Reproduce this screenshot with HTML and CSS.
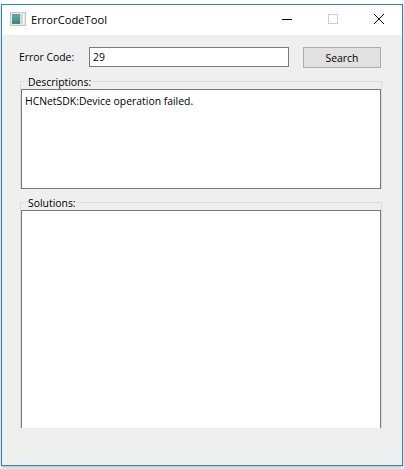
FILE: index.html
```html
<!DOCTYPE html>
<html>
<head>
    <title>ErrorCodeTool</title>
    <link rel="stylesheet" href="styles.css">
</head>
<body>
    <div class="window">
        <div class="titlebar">
            <svg class="app-icon" width="16" height="14" viewBox="0 0 16 14">
                <rect x="0.5" y="0.5" width="15" height="13" fill="#e9ebeb" stroke="#c2c5c5"/>
                <rect x="2" y="2" width="8" height="4" fill="#6d97a3"/>
                <rect x="2" y="6" width="8" height="3" fill="#4f9a94"/>
                <rect x="2" y="9" width="8" height="3" fill="#3f8a70"/>
                <rect x="10" y="2" width="3" height="10" fill="#d3d8d8"/>
                <rect x="13" y="2" width="1" height="10" fill="#f8f9f9"/>
            </svg>
            <span class="title">ErrorCodeTool</span>
            <div class="controls">
                <svg class="ctl" width="46" height="16" viewBox="0 0 46 16"><path d="M18 7.5h10" stroke="#000" fill="none"/></svg>
                <svg class="ctl" width="46" height="16" viewBox="0 0 46 16"><rect x="18.5" y="2.5" width="9" height="9" stroke="#cfcfcf" fill="none"/></svg>
                <svg class="ctl" width="46" height="16" viewBox="0 0 46 16"><path d="M18 2l10 10M28 2L18 12" stroke="#111" fill="none"/></svg>
            </div>
        </div>
        <div class="content">
            <div class="search-row">
                <label class="code-label" for="code">Error Code:</label>
                <input class="code-input" id="code" type="text" value="29">
                <button class="search-btn">Search</button>
            </div>
            <fieldset class="group">
                <legend>Descriptions:</legend>
                <div class="text-box desc-box">HCNetSDK:Device operation failed.</div>
            </fieldset>
            <fieldset class="group">
                <legend>Solutions:</legend>
                <div class="text-box sol-box"></div>
            </fieldset>
        </div>
    </div>
</body>
</html>
```

FILE: styles.css
```css
html, body {
    margin: 0;
    height: 100%;
    background-color: #fff;
    overflow: hidden;
}
body {
    font-family: "Open Sans", Arial, sans-serif;
    font-size: 10.4px;
    color: #000;
    padding: 4px 1px 0 1px;
    box-sizing: border-box;
}
.window {
    width: 402px;
    height: 462px;
    box-sizing: border-box;
    border: 1px solid #2b82d0;
    background-color: #efefef;
    box-shadow: 0 2px 3px rgba(0, 0, 0, 0.25);
    display: flex;
    flex-direction: column;
}
.titlebar {
    height: 30px;
    background-color: #fff;
    display: flex;
    align-items: center;
    padding-left: 8px;
    flex-shrink: 0;
}
.app-icon {
    margin-right: 5px;
    margin-bottom: 2px;
}
.title {
    font-size: 11.2px;
    color: #000;
    margin-bottom: 2px;
}
.controls {
    margin-left: auto;
    display: flex;
}
.ctl {
    display: block;
}
.content {
    flex: 1;
    padding: 12px 20px 0 17px;
    overflow: hidden;
}
.search-row {
    display: flex;
    align-items: flex-start;
    height: 21px;
}
.code-label {
    width: 70px;
    line-height: 20px;
}
.code-input {
    width: 200px;
    height: 20px;
    box-sizing: border-box;
    border: 1px solid #7a7a7a;
    background-color: #fff;
    padding: 0 3px;
    font: inherit;
    color: #000;
    outline: none;
}
.search-btn {
    width: 78px;
    height: 21px;
    margin-left: 14px;
    box-sizing: border-box;
    border: 1px solid #adadad;
    background-color: #e1e1e1;
    font: inherit;
    color: #000;
    padding: 0;
}
.group {
    margin: 5px 0 0 1px;
    padding: 0;
    border: 0;
    border-top: 1px solid #dcdcdc;
    border-left: 1px solid #dcdcdc;
    border-right: 1px solid #dcdcdc;
    min-width: 0;
}
.group legend {
    margin-left: 6px;
    padding: 2px 1px 0 1px;
    line-height: 14px;
}
.text-box {
    box-sizing: border-box;
    border: 1px solid #7a7a7a;
    background-color: #fff;
    padding: 4px 3px;
}
.desc-box {
    height: 100px;
}
.sol-box {
    height: 218px;
    border-bottom: 0;
}
```
